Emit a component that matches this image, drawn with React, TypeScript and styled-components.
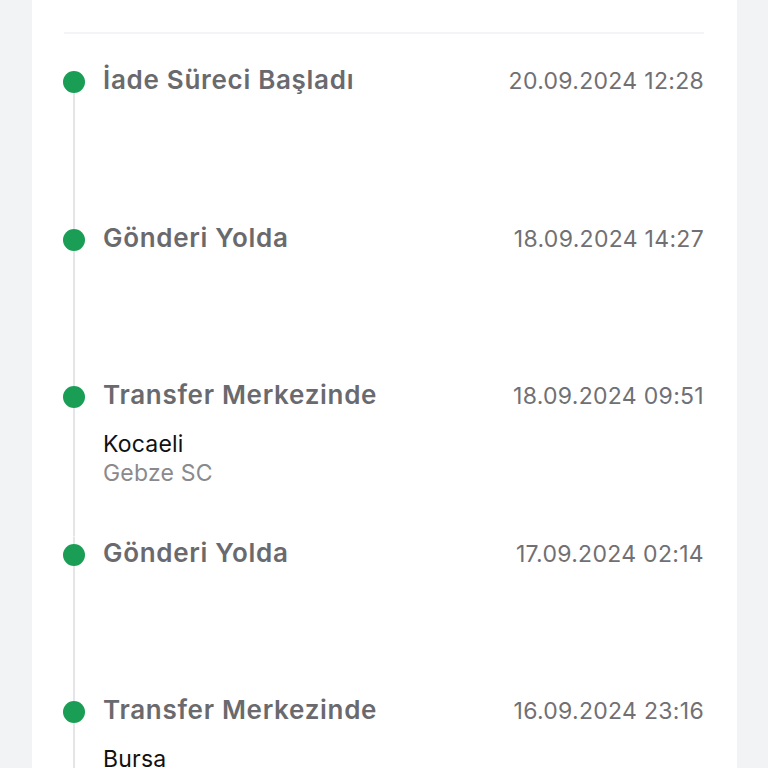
import { createGlobalStyle, styled } from 'styled-components';

const GlobalStyle = createGlobalStyle`
  html, body {
    margin: 0;
    padding: 0;
    background: #f2f3f5;
    font-family: Inter, 'Noto Sans', 'Liberation Sans', sans-serif;
  }
`;

const Page = styled.div`
  padding: 0 31px 0 32px;
  height: 768px;
  overflow: hidden;
`;

const Card = styled.div`
  background: #ffffff;
  padding: 0 33px 0 32px;
  min-height: 768px;
`;

const HeaderSpace = styled.div`
  height: 32px;
`;

const Divider = styled.div`
  height: 2px;
  background: #f4f4f6;
`;

const List = styled.div`
  padding-top: 30px;
`;

const Item = styled.div`
  display: flex;
  gap: 18px;
  height: 157.5px;
`;

const Rail = styled.div<{ $first?: boolean }>`
  width: 22px;
  margin-left: -1px;
  flex-shrink: 0;
  display: flex;
  flex-direction: column;
  align-items: center;
  background: linear-gradient(#e4e5e8, #e4e5e8) no-repeat;
  background-size: 2px ${(p) => (p.$first ? 'calc(100% - 18px)' : '100%')};
  background-position: center bottom;
`;

const Dot = styled.span`
  width: 22px;
  height: 22px;
  margin-top: 7px;
  border-radius: 50%;
  background: #1a9e55;
`;

const Body = styled.div`
  flex: 1;
  min-width: 0;
`;

const TitleRow = styled.div`
  display: flex;
  justify-content: space-between;
  align-items: baseline;
`;

const Title = styled.span`
  font-size: 26px;
  line-height: 32px;
  font-weight: 600;
  color: #6a6a6e;
  letter-spacing: 0.7px;
`;

const Time = styled.span`
  font-size: 23px;
  color: #707074;
  letter-spacing: 0.3px;
`;

const City = styled.div`
  margin-top: 19px;
  font-size: 23px;
  line-height: 29px;
  color: #111111;
  letter-spacing: 0.2px;
`;

const Center = styled.div`
  font-size: 23px;
  line-height: 29px;
  color: #8a8a8e;
  letter-spacing: 0.2px;
`;

type Step = {
  title: string;
  time: string;
  city?: string;
  center?: string;
};

const steps: Step[] = [
  { title: 'İade Süreci Başladı', time: '20.09.2024 12:28' },
  { title: 'Gönderi Yolda', time: '18.09.2024 14:27' },
  {
    title: 'Transfer Merkezinde',
    time: '18.09.2024 09:51',
    city: 'Kocaeli',
    center: 'Gebze SC',
  },
  { title: 'Gönderi Yolda', time: '17.09.2024 02:14' },
  {
    title: 'Transfer Merkezinde',
    time: '16.09.2024 23:16',
    city: 'Bursa',
  },
];

export default function App() {
  return (
    <>
      <GlobalStyle />
      <Page>
        <Card>
          <HeaderSpace />
          <Divider />
          <List>
            {steps.map((step, i) => (
              <Item key={i}>
                <Rail $first={i === 0}>
                  <Dot />
                </Rail>
                <Body>
                  <TitleRow>
                    <Title>{step.title}</Title>
                    <Time>{step.time}</Time>
                  </TitleRow>
                  {step.city && <City>{step.city}</City>}
                  {step.center && <Center>{step.center}</Center>}
                </Body>
              </Item>
            ))}
          </List>
        </Card>
      </Page>
    </>
  );
}
